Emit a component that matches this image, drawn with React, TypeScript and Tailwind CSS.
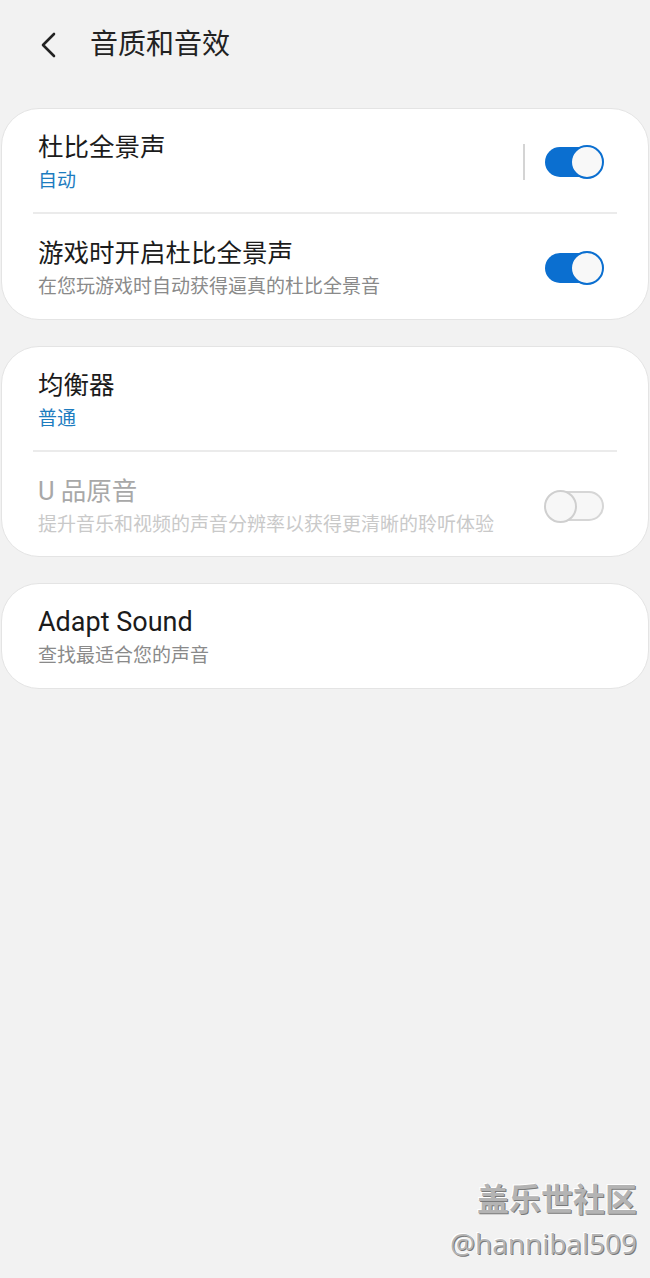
import React from "react"

const font = { fontFamily: '"Roboto", "Noto Sans CJK SC", sans-serif' }

function Toggle({ on }: { on: boolean }) {
  if (!on) {
    return (
      <div className="relative w-[60px] h-[34px] flex items-center">
        <div className="absolute left-[2px] right-0 h-[30px] rounded-full border-2 border-[#d6d6d6] bg-[#f7f7f7]" />
        <div className="absolute left-0 w-[33px] h-[33px] rounded-full border-2 border-[#cfcfcf] bg-[#f7f7f7]" />
      </div>
    )
  }
  return (
    <div className="relative w-[59px] h-[34px] flex items-center">
      <div className="absolute left-0 right-[4px] h-[30px] rounded-full bg-[#0b6fd0]" />
      <div className="absolute right-0 w-[34px] h-[34px] rounded-full border-2 border-[#0b6fd0] bg-[#f8f8f8]" />
    </div>
  )
}

function Row({
  title,
  sub,
  subColor,
  titleColor = "text-[#1b1b1b]",
  titleSize = "text-[25.5px]",
  right,
  pt = "pt-[24px]",
}: {
  title: string
  sub: string
  subColor: string
  titleColor?: string
  titleSize?: string
  right?: React.ReactNode
  pt?: string
}) {
  return (
    <div className={`flex items-center justify-between pl-[36px] pr-[44px] ${pt} pb-[18px]`}>
      <div className="flex flex-col">
        <div className={`${titleSize} leading-[34px] ${titleColor}`}>{title}</div>
        <div className={`text-[19px] leading-[26px] mt-[4px] ${subColor}`}>{sub}</div>
      </div>
      {right}
    </div>
  )
}

export default function App() {
  return (
    <div className="w-[650px] h-[1278px] bg-[#f2f2f2] relative overflow-hidden" style={font}>
      {/* Header */}
      <div className="flex items-center h-[90px] pl-[38px]">
        <svg width="24" height="28" viewBox="0 0 24 28" className="mr-[28px]">
          <path d="M16 3 L5 14 L16 25" fill="none" stroke="#222" strokeWidth="2.6" strokeLinecap="round" strokeLinejoin="round" />
        </svg>
        <h1 className="text-[28px] text-[#222]">音质和音效</h1>
      </div>

      <div className="flex flex-col gap-[26px] px-[1px] mt-[18px]">
        {/* Card 1 */}
        <div className="bg-white rounded-[38px] border border-[#e4e4e4] h-[212px]">
          <Row
            title="杜比全景声"
            sub="自动"
            subColor="text-[#1d7cbf]"
            pt="pt-[21px]"
            right={
              <div className="flex items-center">
                <div className="w-[2px] h-[36px] bg-[#d4d4d4] mr-[20px]" />
                <Toggle on />
              </div>
            }
          />
          <div className="h-[2px] bg-[#ebebeb] mx-[31px]" />
          <Row
            title="游戏时开启杜比全景声"
            sub="在您玩游戏时自动获得逼真的杜比全景音"
            subColor="text-[#8a8a8a]"
            pt="pt-[22px]"
            right={<Toggle on />}
          />
        </div>

        {/* Card 2 */}
        <div className="bg-white rounded-[38px] border border-[#e4e4e4] h-[211px]">
          <Row title="均衡器" sub="普通" subColor="text-[#1d7cbf]" pt="pt-[21px]" />
          <div className="h-[2px] bg-[#ebebeb] mx-[31px]" />
          <Row
            title="U 品原音"
            sub="提升音乐和视频的声音分辨率以获得更清晰的聆听体验"
            titleColor="text-[#a8a8a8]"
            subColor="text-[#c9c9c9]"
            pt="pt-[22px]"
            right={<Toggle on={false} />}
          />
        </div>

        {/* Card 3 */}
        <div className="bg-white rounded-[38px] border border-[#e4e4e4] h-[106px]">
          <Row
            title="Adapt Sound"
            titleSize="text-[27px]"
            sub="查找最适合您的声音"
            subColor="text-[#8a8a8a]"
            pt="pt-[21px]"
          />
        </div>
      </div>

      {/* Watermark */}
      <div className="absolute right-[13px] bottom-[16px] flex flex-col items-end text-[#b4b4b4]">
        <div
          className="text-[32px] font-bold leading-[40px]"
          style={{ textShadow: "1px 1px 0 #7a7a7a, -1px -1px 0 #ffffff" }}
        >
          盖乐世社区
        </div>
        <div
          className="text-[28px] leading-[38px] mt-[4px]"
          style={{ fontFamily: '"Open Sans", sans-serif', textShadow: "1px 1px 0 #7a7a7a, -1px -1px 0 #ffffff" }}
        >
          @hannibal509
        </div>
      </div>
    </div>
  )
}
